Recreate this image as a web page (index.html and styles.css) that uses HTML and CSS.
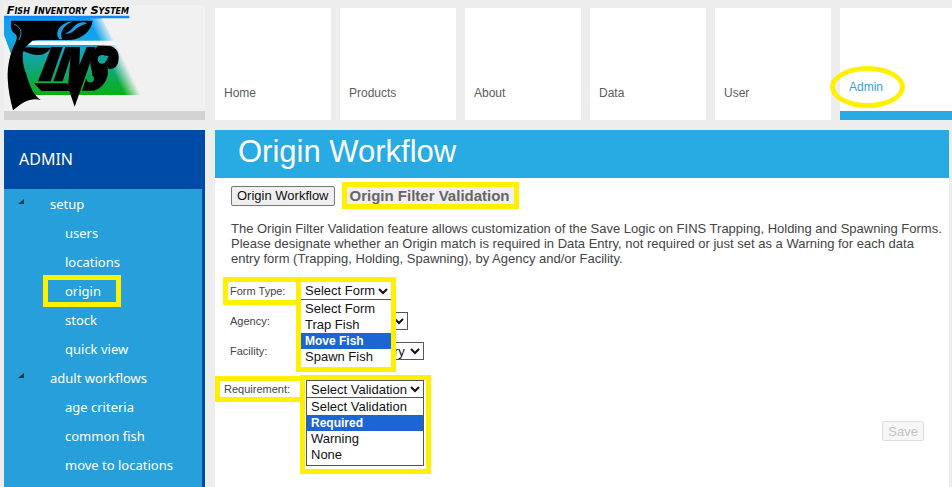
FILE: index.html
```html
<!DOCTYPE html>
<html lang="en">
	<head>
		<meta charset="utf-8">
		<title>Origin Workflow</title>
		<link rel="stylesheet" href="styles.css">
	</head>
	<body>

		<header class="top">
			<a class="logo" href="#">
				<svg viewBox="12 15 603 318" role="img" aria-label="FINS">
					<defs>
						<linearGradient id="sea" x1="0" y1="0" x2="0" y2="1">
							<stop offset="0" stop-color="#0a9cff"/>
							<stop offset="0.3" stop-color="#12a6e6"/>
							<stop offset="0.65" stop-color="#10a680"/>
							<stop offset="1" stop-color="#08b010"/>
						</linearGradient>
						<linearGradient id="fade" gradientUnits="userSpaceOnUse" x1="317" y1="165" x2="357" y2="146">
							<stop offset="0" stop-color="#f1f1f1" stop-opacity="0"/>
							<stop offset="1" stop-color="#f1f1f1"/>
						</linearGradient>
					</defs>
					<path fill="url(#sea)" d="M12 49H302L426 285H90L56 230L34 165L12 105Z"/>
					<path fill="url(#fade)" d="M227 55H312L432 286H352Z"/>
					<path fill="#1787f0" d="M12 47H388V55H12Z"/>
					<text class="logo-text" x="20" y="43">Fish Inventory System</text>
					<!-- fin and tail -->
					<path d="M34 62H278C273 92 250 115 212 120H114C96 121 84 133 76 143C88 141 102 143 116 143H154C142 157 130 166 113 165C92 165 79 156 70 154C66 170 68 195 78 220C87 251 98 285 122 300C107 295 88 298 72 307C58 315 47 324 39 331C31 300 24 269 23 235C22 196 30 160 46 128C55 111 50 104 39 97C32 87 31 74 34 62Z"/>
					<path fill="#12a0ea" d="M218 64C182 68 161 96 178 118H187C176 98 192 76 218 64ZM194 100C218 108 226 78 262 70C252 64 236 66 226 76C216 84 212 96 194 100Z"/>
					<path fill="#f5fcff" d="M97 122H339L350 135H84Z"/>
					<path fill="none" stroke="#10a9dd" stroke-width="3" d="M42 72C68 85 66 102 56 121"/>
					<!-- inside of the fins mark -->
					<path d="M154 141H188L152 244H114Z"/>
					<path d="M196 141H222L188 244H160Z"/>
					<path d="M214 141H240L238 196L260 141H287L224 320L204 262Z"/>
					<path d="M102 250H202L208 273H124Z"/>
					<path d="M294 138H328C350 141 360 160 355 184C352 200 342 209 326 207L320 196C332 222 316 262 282 272H246L258 236C274 238 280 226 274 208C266 182 274 156 294 138Z"/>
					<circle cx="306" cy="178" r="13" fill="#12a398"/>
					<path fill="#12a398" d="M294 182L306 166L326 168L320 182Z"/>
					<circle cx="271" cy="236" r="11" fill="#0aa84c"/>
				</svg>
			</a>
			<nav class="tiles">
				<a href="#">Home</a>
				<a href="#">Products</a>
				<a href="#">About</a>
				<a href="#">Data</a>
				<a href="#">User</a>
				<a href="#" class="active"><span>Admin</span></a>
			</nav>
		</header>

		<div class="page">
			<aside class="side">
				<h2>ADMIN</h2>
				<ul class="menu">
					<li class="group"><a href="#">setup</a></li>
					<li><a href="#">users</a></li>
					<li><a href="#">locations</a></li>
					<li><a href="#" class="marked">origin</a></li>
					<li><a href="#">stock</a></li>
					<li><a href="#">quick view</a></li>
					<li class="group"><a href="#">adult workflows</a></li>
					<li><a href="#">age criteria</a></li>
					<li><a href="#">common fish</a></li>
					<li><a href="#">move to locations</a></li>
				</ul>
			</aside>

			<main class="content">
				<h1>Origin Workflow</h1>
				<div class="body">
					<div class="tabs">
						<button type="button">Origin Workflow</button>
						<button type="button" class="current">Origin Filter Validation</button>
					</div>
					<p>The Origin Filter Validation feature allows customization of the Save Logic on FINS Trapping, Holding and Spawning Forms. Please designate whether an Origin match is required in Data Entry, not required or just set as a Warning for each data entry form (Trapping, Holding, Spawning), by Agency and/or Facility.</p>

					<form>
						<div class="field">
							<label for="formType" class="marked">Form Type:</label>
							<div class="drop form-drop">
								<select id="formType"><option>Select Form</option></select>
								<ul class="list">
									<li>Select Form</li>
									<li>Trap Fish</li>
									<li class="on">Move Fish</li>
									<li>Spawn Fish</li>
								</ul>
							</div>
						</div>
						<div class="field">
							<label for="agency">Agency:</label>
							<select id="agency"><option>Select Agency</option></select>
						</div>
						<div class="field">
							<label for="facility">Facility:</label>
							<select id="facility"><option>Select Hatchery</option></select>
						</div>
						<div class="field require">
							<label for="requirement" class="marked">Requirement:</label>
							<div class="drop">
								<select id="requirement"><option>Select Validation</option></select>
								<ul class="list">
									<li>Select Validation</li>
									<li class="on">Required</li>
									<li>Warning</li>
									<li>None</li>
								</ul>
							</div>
						</div>
						<div class="actions">
							<button type="submit" disabled>Save</button>
						</div>
					</form>
				</div>
			</main>
		</div>

	</body>
</html>
```

FILE: styles.css
```css
* {
	margin: 0;
	padding: 0;
	box-sizing: border-box;
}

body {
	background-color: #ededed;
	font-family: "Liberation Sans", Arial, sans-serif;
	font-size: 13px;
	color: #444;
	min-height: 100vh;
	display: flex;
	flex-direction: column;
}
ul {
	list-style: none;
}
a {
	text-decoration: none;
}

/* header */
.top {
	display: flex;
	gap: 10px;
	padding: 5px 0 0 4px;
}
.logo {
	flex: none;
	width: 201px;
	height: 115px;
	background-color: #f1f1f1;
	border-bottom: 9px solid #d3d3d3;
}
.logo svg {
	display: block;
	width: 201px;
	height: 106px;
	overflow: visible;
}
.logo-text {
	font: italic bold small-caps 34px "DejaVu Sans", Verdana, sans-serif;
}
.tiles {
	flex: 1;
	display: grid;
	grid-template-columns: repeat(5, 116px) 1fr;
	gap: 9px;
	padding-top: 3px;
}
.tiles a {
	display: flex;
	align-items: flex-end;
	height: 112px;
	padding: 0 9px 19px;
	background-color: #fff;
	color: #5c5c5c;
	font-size: 12px;
	line-height: 15px;
}
.tiles .active {
	border-bottom: 9px solid #27abe2;
	padding-bottom: 16px;
	color: #3b9fd6;
}
.active span {
	position: relative;
}
.active span::after {
	content: "";
	position: absolute;
	inset: -14px -22px -13px -19px;
	border: 5px solid #fff000;
	border-radius: 50%;
}

.page {
	flex: 1;
	display: flex;
	gap: 10px;
	padding: 10px 3px 0 4px;
}

/* sidebar */
.side {
	flex: none;
	width: 201px;
	padding-right: 3px;
	background-color: #004ba6;
	color: #fff;
	font-family: "Noto Sans", "Open Sans", sans-serif;
	display: flex;
	flex-direction: column;
}
.side h2 {
	height: 59px;
	padding-left: 15px;
	font-size: 16px;
	font-weight: normal;
	line-height: 59px;
}
.menu {
	flex: 1;
	padding-top: 1px;
	background-color: #279fdb;
}
.menu li {
	height: 29px;
	padding-left: 61px;
	line-height: 29px;
}
.menu .group {
	position: relative;
	padding-left: 46px;
}
.group::before {
	content: "";
	position: absolute;
	left: 14px;
	top: 9px;
	border-left: 6px solid transparent;
	border-bottom: 5px solid #17384e;
}
.menu a {
	color: #fff;
}

/* yellow markers */
.marked {
	position: relative;
}
.marked::after {
	content: "";
	position: absolute;
	inset: -7px -20px -7px -22px;
	border: 5px solid #fff000;
}

/* content */
.content {
	flex: 1;
	background-color: #fff;
}
.content h1 {
	height: 48px;
	padding-left: 23px;
	background-color: #27abe2;
	color: #fff;
	font-size: 31px;
	font-weight: normal;
	line-height: 44px;
}
.body {
	padding: 4px 5px 0 16px;
}
.tabs {
	display: flex;
	align-items: center;
	gap: 7px;
}
button {
	height: 20px;
	padding: 0 5px;
	border: 1px solid #767676;
	border-radius: 2px;
	background-color: #efefef;
	color: #111;
	font-family: inherit;
	font-size: 13px;
}
.tabs .current {
	height: 27px;
	padding: 0 4px 0 3px;
	border: 5px solid #fff000;
	border-radius: 0;
	color: #666;
	font-size: 15px;
	font-weight: bold;
}
.body p {
	margin-top: 12px;
	line-height: 15px;
}
form {
	display: flex;
	flex-direction: column;
	gap: 12px;
	margin: 16px 20px 0 -7px;
}
.field {
	display: flex;
	align-items: center;
	height: 18px;
	padding-left: 6px;
}
.field label {
	width: 71px;
	font-size: 11px;
	line-height: 16px;
}
.field .marked::after {
	inset: -6px -2px -6px -7px;
}
select {
	display: block;
	height: 18px;
	border: 1px solid #555;
	border-radius: 0;
	background-color: #fff;
	color: #111;
	font-family: inherit;
	font-size: 13px;
}
#formType {
	width: 90px;
}
#agency {
	width: 107px;
}
#facility {
	width: 123px;
	padding-left: 7px;
}
.require {
	margin-top: 8px;
	padding-left: 0;
}
.require label {
	width: 82px;
}
.require .marked::after {
	inset: -5px 1px -5px -9px;
}

/* open drop-downs */
.drop {
	position: relative;
	z-index: 1;
}
.drop::after {
	content: "";
	position: absolute;
	inset: -5px -7px -76px -6px;
	border: 5px solid #fff000;
}
.list {
	position: absolute;
	top: 18px;
	left: 0;
	right: 0;
	height: 68px;
	padding-top: 1px;
	border: 1px solid #555;
	border-top: none;
	background-color: #fff;
	color: #111;
}
.list li {
	height: 16px;
	padding-left: 4px;
	line-height: 16px;
	white-space: nowrap;
}
.list .on {
	background-color: #1b66d2;
	color: #fff;
	font-size: 12px;
	font-weight: bold;
}
.form-drop::after {
	inset: -5px -5px -72px;
}
.form-drop select,
.form-drop .list {
	border-width: 0 0 1px;
}
.form-drop .list {
	border-color: transparent;
}

.actions {
	display: flex;
	justify-content: flex-end;
	margin-top: 11px;
}
.actions button {
	border-color: #ddd;
	background-color: #f7f7f7;
	color: #c4c4c4;
}
```
